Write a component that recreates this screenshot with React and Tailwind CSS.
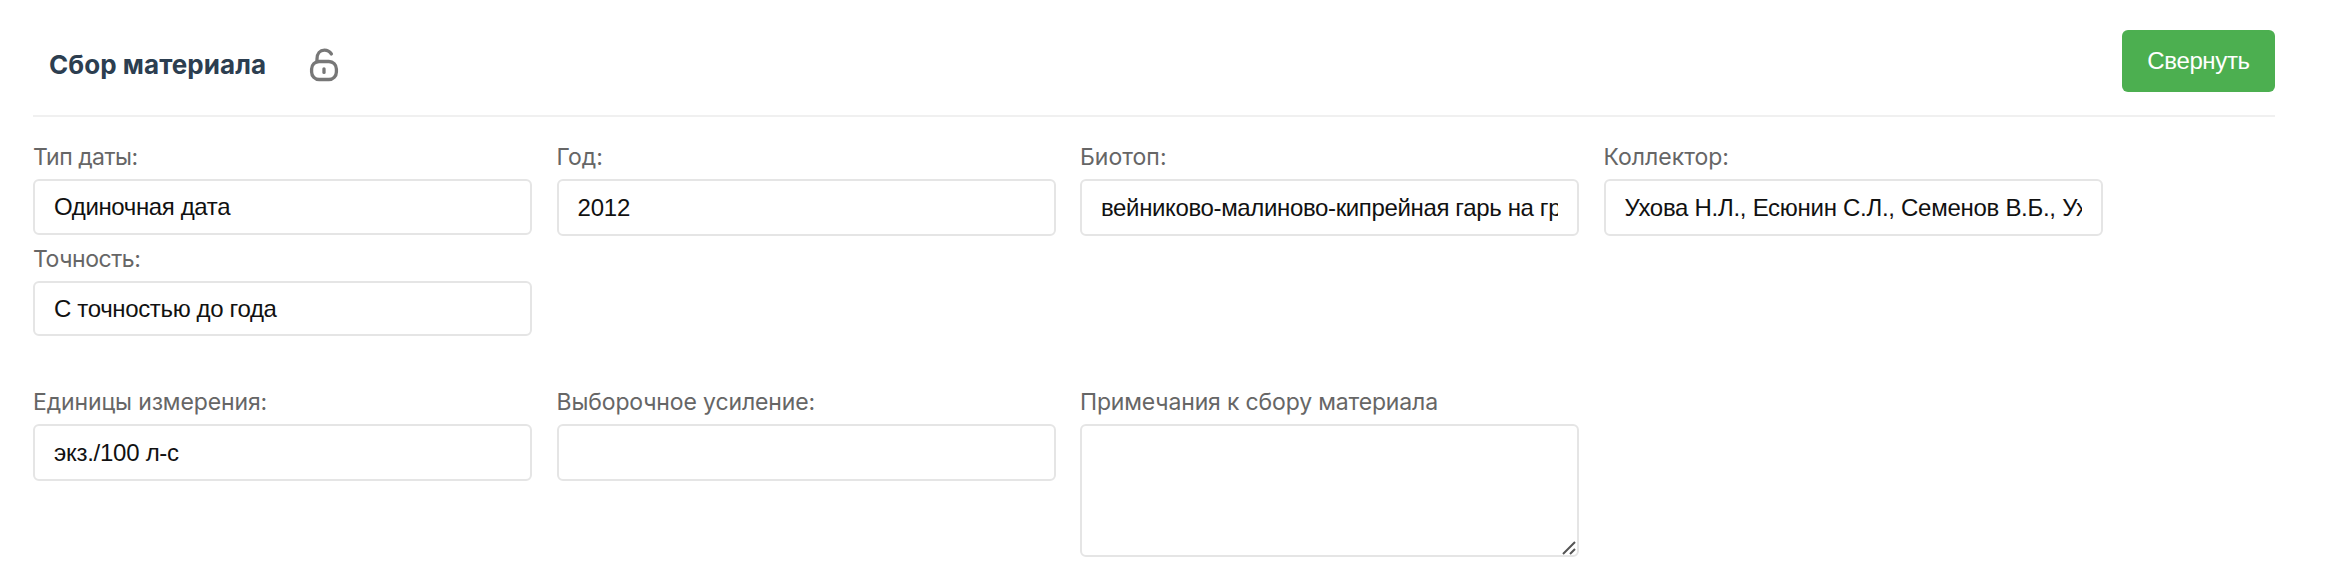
const inputBox =
  "block w-[499px] rounded-[6px] border-2 border-[#e5e5e5] bg-white px-[19px] py-0 text-[24px] leading-[28px] text-[#111] outline-none font-['Liberation_Sans',sans-serif]";

function Field({ label, labelClass = "", children }) {
  return (
    <div className="flex w-[499px] flex-col">
      <label className="block h-[46px] pt-[10px] text-[23px] leading-[28px] whitespace-nowrap text-[#666]">
        <span className={labelClass}>{label}</span>
      </label>
      {children}
    </div>
  );
}

function UnlockIcon() {
  return (
    <svg className="h-[34px] w-[30px]" viewBox="0 0 30 34" fill="none" stroke="#777" strokeWidth="3.3" strokeLinecap="round">
      <rect x="2.6" y="13.5" width="24.8" height="18" rx="7.5" />
      <path d="M8 13.5V11C8 5.5 11 2.2 15.4 2.2C18.4 2.2 20.8 3.6 22.4 6" />
      <path d="M15 20.8V24.4" />
    </svg>
  );
}

export default function App() {
  return (
    <div className="h-[580px] w-[2336px] overflow-hidden bg-white pl-[33px] font-[Inter,sans-serif]">
      <header className="flex h-[117px] w-[2242px] items-start justify-between border-b-2 border-[#f0f0f0] pt-[30px]">
        <div className="flex pl-[16px]">
          <h2 className="mt-[18px] w-[220px] text-[26px] leading-[34px] font-bold tracking-[0.05px] whitespace-nowrap text-[#2c3e50]">
            Сбор материала
          </h2>
          <div className="mt-[18px] ml-[40px]">
            <UnlockIcon />
          </div>
        </div>
        <button className="h-[62px] w-[153px] rounded-[6px] bg-[#4caf50] pb-[1px] text-[24px] tracking-[-0.35px] text-white font-['Liberation_Sans',sans-serif]">
          Свернуть
        </button>
      </header>
      <div className="flex items-start gap-[24.5px] pt-[16px]">
        <div className="flex flex-col">
          <Field label="Тип даты:" labelClass="tracking-[-0.5px]">
            <input className={`${inputBox} h-[56px] tracking-[-0.37px]`} defaultValue="Одиночная дата" />
          </Field>
          <Field label="Точность:" labelClass="tracking-[-0.45px]">
            <input className={`${inputBox} h-[55px] tracking-[-0.35px]`} defaultValue="С точностью до года" />
          </Field>
        </div>
        <Field label="Год:">
          <input className={`${inputBox} h-[57px] tracking-[-0.2px]`} defaultValue="2012" />
        </Field>
        <Field label="Биотоп:">
          <input className={`${inputBox} h-[57px] tracking-[-0.36px]`} defaultValue="вейниково-малиново-кипрейная гарь на границе" />
        </Field>
        <Field label="Коллектор:">
          <input className={`${inputBox} h-[57px] tracking-[-0.28px]`} defaultValue="Ухова Н.Л., Есюнин С.Л., Семенов В.Б., Ухова О.В." />
        </Field>
      </div>
      <div className="flex items-start gap-[24.5px] pt-[42px]">
        <Field label="Единицы измерения:" labelClass="tracking-[-0.13px]">
          <input className={`${inputBox} h-[57px] tracking-[-0.27px]`} defaultValue="экз./100 л-с" />
        </Field>
        <Field label="Выборочное усиление:" labelClass="tracking-[-0.13px]">
          <input className={`${inputBox} h-[57px]`} defaultValue="" />
        </Field>
        <Field label="Примечания к сбору материала" labelClass="tracking-[-0.16px]">
          <div className="relative">
            <textarea className={`${inputBox} h-[133px] resize-none`} defaultValue="" />
            <svg className="absolute right-[3px] bottom-[2px] h-[14px] w-[14px]" viewBox="0 0 14 14" fill="none" stroke="#555" strokeWidth="2">
              <path d="M1 13L13 1M8 13L13 8" />
            </svg>
          </div>
        </Field>
      </div>
    </div>
  );
}
